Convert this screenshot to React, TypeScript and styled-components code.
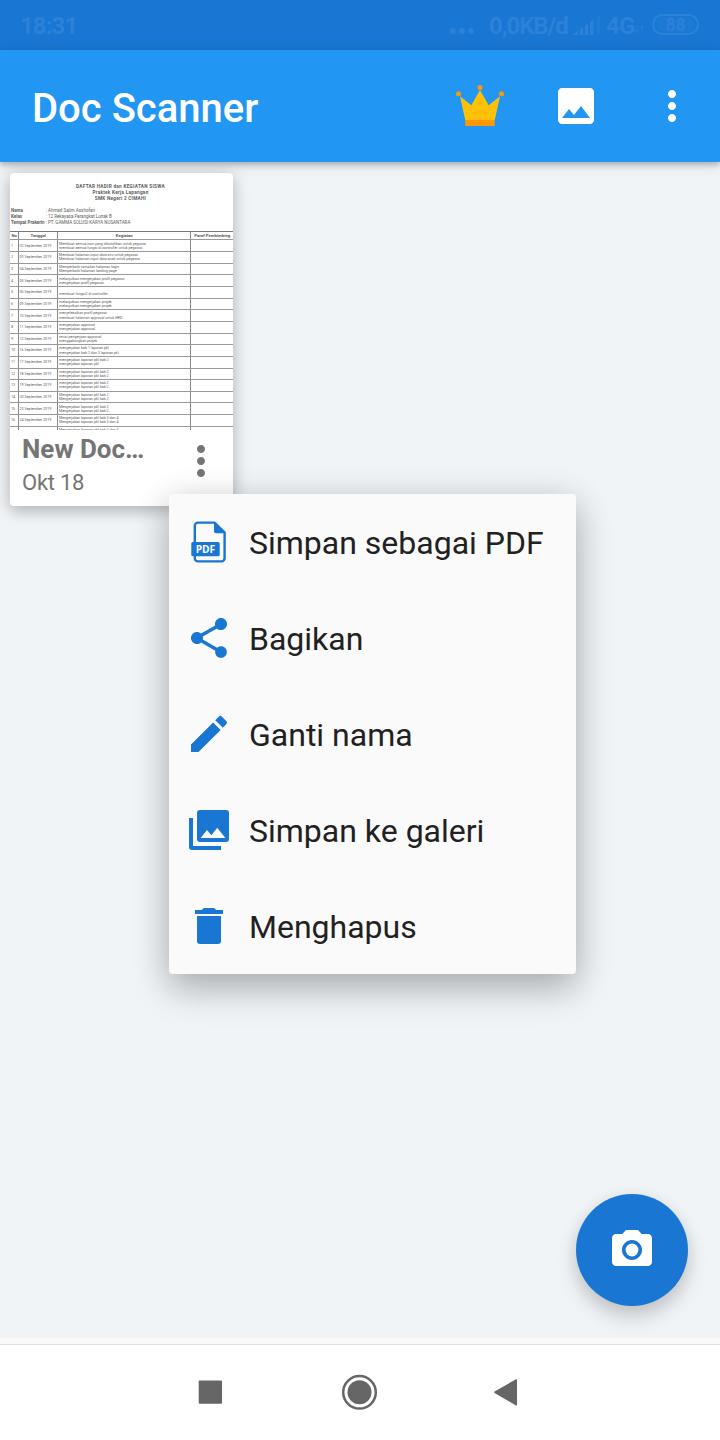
import React from 'react';
import styled, { createGlobalStyle } from 'styled-components';
import { MdImage, MdMoreVert, MdShare, MdEdit, MdCameraAlt } from 'react-icons/md';

const Global = createGlobalStyle`
  * { box-sizing: border-box; }
  body { margin: 0; background: #fff; font-family: Roboto, "Liberation Sans", sans-serif; }
`;

const Screen = styled.div`
  width: 720px;
  height: 1440px;
  display: flex;
  flex-direction: column;
  position: relative;
  overflow: hidden;
`;

const StatusBar = styled.header`
  height: 50px;
  flex: none;
  display: flex;
  align-items: center;
  padding: 2px 21px 0 20px;
  background: #1976d2;
  color: #2b82d8;
  font-size: 24px;
  font-weight: 700;
  line-height: 28px;
`;

const StatusText = styled.span<{ $width: number; $gap?: number; $spacing?: number }>`
  width: ${p => p.$width}px;
  margin-left: ${p => p.$gap ?? 0}px;
  letter-spacing: ${p => p.$spacing ?? 0}px;
  white-space: nowrap;
`;

const Spacer = styled.div`
  flex: 1;
`;

const StatusDots = styled.svg`
  margin-top: 10px;
`;

const SignalBars = styled.svg`
  margin-left: 5px;
`;

const Arrows = styled.svg`
  margin-top: 6px;
`;

const Battery = styled.div`
  width: 47px;
  height: 21px;
  margin: 0 0 3px 8px;
  border: 2px solid #2b82d8;
  border-radius: 11px;
  display: flex;
  align-items: center;
  justify-content: center;
`;

const BatteryLevel = styled.span`
  width: 37px;
  height: 15px;
  border-radius: 7px;
  background: #1c79d4;
  font-size: 17.5px;
  line-height: 16px;
  text-align: center;
`;

const AppBar = styled.div`
  height: 112px;
  flex: none;
  display: flex;
  align-items: center;
  padding: 0 24px 0 32px;
  background: #2196f3;
  color: #fff;
  box-shadow: 0 3px 5px rgba(0, 0, 0, 0.2), 0 3px 14px rgba(0, 0, 0, 0.12);
  z-index: 1;
`;

const Title = styled.h1`
  flex: 1;
  margin: 0;
  padding-top: 6px;
  font-size: 40px;
  font-weight: 500;
  line-height: 48px;
`;

const Actions = styled.div`
  display: flex;
  gap: 48px;

  svg { display: block; }
`;

const Content = styled.main`
  height: 1176px;
  flex: none;
  padding: 11px 10px;
  background: #f0f4f7;
`;

const Card = styled.article`
  width: 223px;
  height: 333px;
  border-radius: 4px;
  background: #fff;
  box-shadow: 0 6px 14px rgba(0, 0, 0, 0.18), 0 1px 20px rgba(0, 0, 0, 0.12);
  display: flex;
  flex-direction: column;
`;

const Sheet = styled.div`
  height: 257px;
  flex: none;
  overflow: hidden;
  padding-top: 11.3px;
  border-radius: 4px 4px 0 0;
  color: #5c5c5c;
`;

const SheetTitle = styled.div<{ $spacing: number }>`
  padding-right: 2px;
  font-size: 4.7px;
  line-height: 5.8px;
  font-weight: 700;
  letter-spacing: ${p => p.$spacing}px;
  text-align: center;
`;

const SheetInfo = styled.dl`
  margin: 6px 0 5.2px 1px;
  display: grid;
  grid-template-columns: 35px 2px 1fr;
  font-size: 4.5px;
  line-height: 6.2px;

  dt { font-weight: 700; white-space: nowrap; }
  dd { margin: 0; font-size: 4.5px; white-space: nowrap; }
`;

const SheetRow = styled.div<{ $head?: boolean }>`
  height: ${p => (p.$head ? 8 : 11.65)}px;
  display: grid;
  grid-template-columns: 8.5px 39.5px 132.5px 1fr;
  border-top: 1px solid ${p => (p.$head ? '#777' : '#999')};
  font-size: ${p => (p.$head ? 4.3 : 3.65)}px;
  font-weight: ${p => (p.$head ? 700 : 400)};
  line-height: 4.2px;
  text-align: ${p => (p.$head ? 'center' : 'left')};
`;

const SheetCell = styled.div`
  border-right: 1px solid #888;
  padding-left: 1px;
  display: flex;
  flex-direction: column;
  justify-content: center;
  white-space: nowrap;

  &:last-child { border-right: 0; }
`;

const CardFooter = styled.footer`
  flex: 1;
  display: flex;
  align-items: center;
  padding: 0 8px 0 12px;
  color: #757575;

  svg { display: block; margin-top: -14px; }
`;

const CardText = styled.div`
  flex: 1;
  align-self: flex-start;
  padding-top: 3px;
`;

const DocName = styled.div`
  font-size: 26px;
  line-height: 32px;
  font-weight: 700;
  white-space: nowrap;
`;

const DocDate = styled.div`
  padding-top: 3px;
  font-size: 22px;
  line-height: 30px;
  letter-spacing: -0.25px;
`;

const Menu = styled.nav`
  position: absolute;
  left: 169px;
  top: 494px;
  width: 407px;
  border-radius: 4px;
  background: #fafafa;
  box-shadow: 0 16px 36px rgba(0, 0, 0, 0.22), 0 4px 36px rgba(0, 0, 0, 0.12);
  z-index: 2;
`;

const MenuItem = styled.div`
  height: 96px;
  display: flex;
  align-items: center;
  gap: 16px;
  padding: 0 16px;
  color: #212121;
  font-size: 32px;
  white-space: nowrap;

  svg { flex: none; color: #1976d2; }
`;

const MenuLabel = styled.span`
  padding-top: 2px;
`;

const Fab = styled.button`
  position: absolute;
  left: 576px;
  top: 1194px;
  width: 112px;
  height: 112px;
  border: 0;
  border-radius: 50%;
  padding: 0;
  display: flex;
  align-items: center;
  justify-content: center;
  background: #1976d2;
  color: #fff;
  box-shadow: 0 11px 20px rgba(0, 0, 0, 0.17), 0 2px 16px rgba(0, 0, 0, 0.07);
`;

const BottomStrip = styled.div`
  height: 7px;
  flex: none;
  background: #fafafa;
  border-bottom: 1px solid #e0e0e0;
`;

const NavBar = styled.div`
  flex: 1;
  display: flex;
  align-items: center;
  justify-content: space-between;
  padding: 0 190px 1px;
  background: #fff;
`;

const NavIcon = styled.svg`
  width: 40px;
  height: 40px;
  fill: #666;
`;

const Crown = () => (
  <svg width="48" height="48" viewBox="0 0 48 48">
    <path fill="#ffc107" d="M4 14.3 15.3 23.3 24 8l8.7 15.3L44 14.3 38.7 38.5H9.3z" />
    <path fill="#ff9800" d="M9.3 38h29.4v6H9.3z" />
    <g fill="#ff9800">
      <circle cx="2.5" cy="11.7" r="2.5" />
      <circle cx="24" cy="5.4" r="2.5" />
      <circle cx="45.5" cy="11.7" r="2.5" />
    </g>
  </svg>
);

const PdfIcon = () => (
  <svg width="48" height="48" viewBox="0 0 48 48">
    <path
      d="M29.5 4.6H13a3.2 3.2 0 0 0-3.2 3.2v32.4a3.2 3.2 0 0 0 3.2 3.2h23.4a3.2 3.2 0 0 0 3.2-3.2V14.6z"
      fill="none"
      stroke="currentColor"
      strokeWidth="2.4"
    />
    <path d="M29 4l11.5 11.3H31a2 2 0 0 1-2-2z" fill="currentColor" />
    <rect x="6.3" y="24" width="28.4" height="14.2" rx="1.5" fill="currentColor" />
    <text x="20.4" y="34.8" textAnchor="middle" fontFamily="Open Sans, sans-serif" fontWeight="700" fontSize="10.2" fill="#fff">PDF</text>
  </svg>
);

const GalleryIcon = () => (
  <svg width="48" height="48" viewBox="0 0 24 24" fill="currentColor">
    <path fillRule="evenodd" d="M7.500 2h13A1.500 1.500 0 0 1 22 3.500v13a1.500 1.500 0 0 1-1.500 1.500h-13A1.500 1.500 0 0 1 6 16.500v-13A1.500 1.500 0 0 1 7.500 2zM7.800 16h12.400l-4.100-5.100-2.900 3.700L11 12z" />
    <path d="M2 6h2v14h14v2H3.500A1.500 1.500 0 0 1 2 20.500z" />
  </svg>
);

const TrashIcon = () => (
  <svg width="48" height="48" viewBox="0 0 24 24" fill="currentColor">
    <path d="M6 7h12v12.500a1.500 1.500 0 0 1-1.500 1.500h-9A1.500 1.500 0 0 1 6 19.500z" />
    <path d="M5 4h3.500c.3-.7.800-1 1.500-1h4c.7 0 1.200.3 1.500 1H19v2H5z" />
  </svg>
);

const Signal = () => (
  <SignalBars width="30" height="22" viewBox="0 0 30 22" fill="#2b82d8">
    <path d="M0 20l6-4v4zM8 14l3-2v8H8zM13 11l3-2.500V20h-3zM18 7l3.500-2.500V20H18z" />
    <path d="M25 2l3-2v20h-3z" fill="#207bd5" />
  </SignalBars>
);

const DataArrows = () => (
  <Arrows width="9" height="10" viewBox="0 0 9 10" fill="none" stroke="#247ed6" strokeWidth="1.500">
    <path d="M2.500 1v7M.5 6l2 2.500M6.500 9V2M8.500 4l-2-2.500" />
  </Arrows>
);

const rows: [string, string, string][] = [
  ['02 September 2019', 'Membuat semua icon yang dibutuhkan untuk pegawai', 'membuat semua fungsi di controller untuk pegawai.'],
  ['03 September 2019', 'Membuat halaman input data siru untuk pegawai', 'Membuat halaman input data anak untuk pegawai'],
  ['04 September 2019', 'Memperbaiki tampilan halaman login', 'Memperbaiki halaman landing page'],
  ['05 September 2019', 'melanjutkan mengerjakan profil pegawai', 'mengerjakan profil pegawai.'],
  ['06 September 2019', '', 'membuat fungsi2 di controller'],
  ['09 September 2019', 'melanjutkan mengerjakan projek', 'melanjutkan mengerjakan projek'],
  ['10 September 2019', 'menyelesaikan profil pegawai', 'membuat halaman approval untuk HRD'],
  ['11 September 2019', 'mengerjakan approval', 'mengerjakan approval.'],
  ['12 September 2019', 'revisi pengerjaan approval', 'menggabungkan projek'],
  ['16 September 2019', 'mengerjakan bab 1 laporan pkl', 'mengerjakan bab 2 dan 3 laporan pkl'],
  ['17 September 2019', 'mengerjakan laporan pkl bab 2', 'mengerjakan laporan pkl'],
  ['18 September 2019', 'mengerjakan laporan pkl bab 2', 'mengerjakan laporan pkl bab 2.'],
  ['19 September 2019', 'mengerjakan laporan pkl bab 2', 'mengerjakan laporan pkl bab 2.'],
  ['20 September 2019', 'Mengerjakan laporan pkl bab 2', 'Mengerjakan laporan pkl bab 2.'],
  ['23 September 2019', 'Mengerjakan laporan pkl bab 2', 'Mengerjakan laporan pkl bab 2.'],
  ['24 September 2019', 'Mengerjakan laporan pkl bab 3 dan 4', 'Mengerjakan laporan pkl bab 3 dan 4'],
  ['25 September 2019', 'Mengerjakan laporan pkl bab 3 dan 4', 'Mengerjakan laporan pkl bab 3 dan 4'],
];

const menuItems = [
  { label: 'Simpan sebagai PDF', icon: <PdfIcon /> },
  { label: 'Bagikan', icon: <MdShare size={48} /> },
  { label: 'Ganti nama', icon: <MdEdit size={48} /> },
  { label: 'Simpan ke galeri', icon: <GalleryIcon /> },
  { label: 'Menghapus', icon: <TrashIcon /> },
];

export default function App() {
  return (
    <Screen>
      <Global />
      <StatusBar>
        <StatusText $width={60} $spacing={-0.9}>18:31</StatusText>
        <Spacer />
        <StatusDots width="24" height="6" viewBox="0 0 24 6" fill="#2b82d8">
          <circle cx="3" cy="3" r="3" />
          <circle cx="12" cy="3" r="3" />
          <circle cx="21" cy="3" r="3" />
        </StatusDots>
        <StatusText $width={78} $gap={15} $spacing={-1.1}>0,0KB/d</StatusText>
        <Signal />
        <StatusText $width={29} $gap={4} $spacing={-0.8}>4G</StatusText>
        <DataArrows />
        <Battery>
          <BatteryLevel>88</BatteryLevel>
        </Battery>
      </StatusBar>
      <AppBar>
        <Title>Doc Scanner</Title>
        <Actions>
          <Crown />
          <MdImage size={48} />
          <MdMoreVert size={48} />
        </Actions>
      </AppBar>
      <Content>
        <Card>
          <Sheet>
            <SheetTitle $spacing={0.27}>DAFTAR HADIR dan KEGIATAN SISWA</SheetTitle>
            <SheetTitle $spacing={0.27}>Praktek Kerja Lapangan</SheetTitle>
            <SheetTitle $spacing={0.25}>SMK Negeri 2 CIMAHI</SheetTitle>
            <SheetInfo>
              <dt>Nama</dt><dd>:</dd><dd>Ahmad Salim Asshofari</dd>
              <dt>Kelas</dt><dd>:</dd><dd>12 Rekayasa Perangkat Lunak B</dd>
              <dt>Tempat Prakerin</dt><dd>:</dd><dd>PT. GAMMA SOLUSI KARYA NUSANTARA</dd>
            </SheetInfo>
            <SheetRow $head>
              <SheetCell>No</SheetCell>
              <SheetCell>Tanggal</SheetCell>
              <SheetCell>Kegiatan</SheetCell>
              <SheetCell>Paraf Pembimbing</SheetCell>
            </SheetRow>
            {rows.map(([date, first, second], i) => (
              <SheetRow key={date}>
                <SheetCell>{i + 1}</SheetCell>
                <SheetCell>{date}</SheetCell>
                <SheetCell>
                  <span>{first || '\u00a0'}</span>
                  <span>{second}</span>
                </SheetCell>
                <SheetCell />
              </SheetRow>
            ))}
          </Sheet>
          <CardFooter>
            <CardText>
              <DocName>New Doc…</DocName>
              <DocDate>Okt 18</DocDate>
            </CardText>
            <MdMoreVert size={48} />
          </CardFooter>
        </Card>
      </Content>
      <BottomStrip />
      <NavBar>
        <NavIcon viewBox="0 0 40 40">
          <rect x="8.700" y="8.500" width="23.300" height="23.300" rx="1" />
        </NavIcon>
        <NavIcon viewBox="0 0 40 40">
          <circle cx="19.500" cy="20.300" r="16.300" fill="none" stroke="#666" strokeWidth="2.500" />
          <circle cx="19.500" cy="20.300" r="12" />
        </NavIcon>
        <NavIcon viewBox="0 0 40 40">
          <path d="M4.500 19.600Q4 20.300 4.500 21L25.500 33.200Q27 33.800 27 32.500V8.200Q27 7 25.500 7.500z" />
        </NavIcon>
      </NavBar>
      <Menu>
        {menuItems.map(item => (
          <MenuItem key={item.label}>
            {item.icon}
            <MenuLabel>{item.label}</MenuLabel>
          </MenuItem>
        ))}
      </Menu>
      <Fab>
        <MdCameraAlt size={48} />
      </Fab>
    </Screen>
  );
}
